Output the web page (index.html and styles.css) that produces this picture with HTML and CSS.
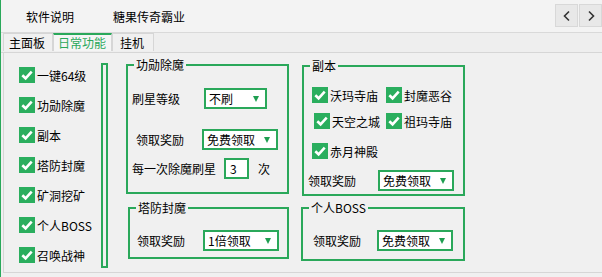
FILE: index.html
```html
<!DOCTYPE html>
<html lang="zh-CN">
<head>
  <meta charset="UTF-8">
  <title>糖果传奇霸业</title>
  <link rel="stylesheet" href="styles.css">
</head>
<body>
  <div class="window">
    <header class="topbar">
      <nav class="menu">
        <span class="menu-item">软件说明</span>
        <span class="menu-item">糖果传奇霸业</span>
      </nav>
      <div class="pager">
        <button class="pager-btn"><svg width="10" height="12" viewBox="0 0 10 12"><polyline points="7,1.5 2.5,6 7,10.5" fill="none" stroke="#333" stroke-width="1.6"/></svg></button>
        <button class="pager-btn"><svg width="10" height="12" viewBox="0 0 10 12"><polyline points="3,1.5 7.5,6 3,10.5" fill="none" stroke="#333" stroke-width="1.6"/></svg></button>
      </div>
    </header>

    <div class="tabs">
      <span class="tab">主面板</span>
      <span class="tab active">日常功能</span>
      <span class="tab">挂机</span>
    </div>

    <main class="panel">
      <ul class="checklist">
        <li class="check"><span class="box"></span>一键64级</li>
        <li class="check"><span class="box"></span>功勋除魔</li>
        <li class="check"><span class="box"></span>副本</li>
        <li class="check"><span class="box"></span>塔防封魔</li>
        <li class="check"><span class="box"></span>矿洞挖矿</li>
        <li class="check"><span class="box"></span>个人BOSS</li>
        <li class="check"><span class="box"></span>召唤战神</li>
      </ul>
      <div class="divider"></div>

      <div class="groups">
        <fieldset class="group group-xunmo">
          <legend>功勋除魔</legend>
          <div class="field first">
            <span class="label lbl-star">刷星等级</span>
            <div class="combo combo-short">不刷<span class="arrow"></span></div>
          </div>
          <div class="field second">
            <span class="label lbl-reward">领取奖励</span>
            <div class="combo">免费领取<span class="arrow"></span></div>
          </div>
          <div class="field third">
            <span class="label lbl-times">每一次除魔刷星</span>
            <div class="num">3</div>
            <span class="unit">次</span>
          </div>
        </fieldset>

        <fieldset class="group group-fuben">
          <legend>副本</legend>
          <div class="cb-row">
            <span class="check small"><span class="box"></span>沃玛寺庙</span>
            <span class="check small"><span class="box"></span>封魔恶谷</span>
          </div>
          <div class="cb-row mid">
            <span class="check small shift"><span class="box"></span>天空之城</span>
            <span class="check small"><span class="box"></span>祖玛寺庙</span>
          </div>
          <div class="cb-row last">
            <span class="check small"><span class="box"></span>赤月神殿</span>
          </div>
          <div class="field reward">
            <span class="label lbl-fuben">领取奖励</span>
            <div class="combo">免费领取<span class="arrow"></span></div>
          </div>
        </fieldset>

        <fieldset class="group group-tafang">
          <legend>塔防封魔</legend>
          <div class="field single">
            <span class="label lbl-tafang">领取奖励</span>
            <div class="combo tall">1倍领取<span class="arrow"></span></div>
          </div>
        </fieldset>

        <fieldset class="group group-boss">
          <legend>个人BOSS</legend>
          <div class="field single">
            <span class="label lbl-boss">领取奖励</span>
            <div class="combo">免费领取<span class="arrow"></span></div>
          </div>
        </fieldset>
      </div>
    </main>
  </div>
</body>
</html>
```

FILE: styles.css
```css
body {
  margin: 0;
  background-color: #f0f0f0;
  font-family: "Noto Sans CJK SC", "Noto Sans", sans-serif;
  font-size: 12px;
  color: #000;
}
.window {
  width: 602px;
  height: 277px;
  border-left: 1px solid #2aa85a;
  box-sizing: border-box;
  overflow: hidden;
}
.topbar {
  height: 33px;
  display: flex;
  justify-content: space-between;
  background-color: #f3f3f3;
  border-bottom: 1px solid #d9d9d9;
  box-sizing: border-box;
}
.menu {
  display: flex;
  align-items: center;
  height: 33px;
}
.menu-item {
  padding-left: 25px;
  padding-right: 14px;
}
.pager {
  display: flex;
  padding-top: 4px;
  gap: 1px;
}
.pager-btn {
  width: 23px;
  height: 23px;
  padding: 0;
  border: 1px solid #d8d8d8;
  background-color: #e8e8e8;
  display: flex;
  align-items: center;
  justify-content: center;
}
.tabs {
  height: 19px;
  display: flex;
  padding-left: 2px;
  background-color: #eeeeee;
  border-bottom: 1px solid #d6d6d6;
}
.tab {
  height: 18px;
  line-height: 18px;
  padding: 0 5px;
  border: 1px solid #d6d6d6;
  border-bottom: none;
  background-color: #f0f0f0;
  box-sizing: border-box;
}
.tab:first-child {
  width: 50px;
}
.tab.active {
  width: 59px;
  padding-left: 4px;
  color: #2aa85a;
  border-top: 2px solid #2aa85a;
  line-height: 16px;
  background-color: #f5f5f5;
}
.tab:last-child {
  width: 42px;
  padding-left: 7px;
}
.panel {
  display: flex;
  height: 219px;
  margin-left: 2px;
  border-left: 1px solid #d6d6d6;
  border-bottom: 1px solid #d6d6d6;
}
.checklist {
  list-style: none;
  margin: 0;
  padding: 14px 0 0 15px;
  width: 82px;
  display: flex;
  flex-direction: column;
  gap: 14px;
}
.check {
  display: flex;
  align-items: center;
  gap: 2px;
  height: 16px;
  white-space: nowrap;
}
.box {
  width: 16px;
  height: 16px;
  flex: none;
  background-color: #2aae5e;
  background-image: url("data:image/svg+xml,%3Csvg xmlns='http://www.w3.org/2000/svg' width='16' height='16'%3E%3Cpath d='M3.3 8.2 L6.6 11.3 L12.7 4.6' fill='none' stroke='white' stroke-width='2.6'/%3E%3C/svg%3E");
}
.divider {
  width: 7px;
  height: 205px;
  margin-top: 10px;
  border: 2px solid #2aa85a;
  box-sizing: border-box;
}
.groups {
  display: grid;
  grid-template-columns: 163px 163px;
  grid-template-rows: 136px 58px;
  column-gap: 13px;
  row-gap: 7px;
  margin-left: 18px;
  margin-top: 5px;
}
.group {
  margin: 0;
  padding: 0;
  min-width: 0;
  border: 2px solid #2aa85a;
}
.group legend {
  margin-left: 6px;
  padding: 0 2px;
  line-height: 14px;
  font-size: 12px;
}
.group-fuben {
  margin-top: 1px;
  height: 133px;
}
.group-tafang {
  margin-left: 2px;
}
.group-boss {
  margin-left: -1px;
  height: 56px;
}
.field {
  display: flex;
  align-items: center;
  height: 20px;
}
.label {
  padding-left: 4px;
  box-sizing: border-box;
  flex: none;
}
.combo {
  position: relative;
  width: 76px;
  height: 21px;
  box-sizing: border-box;
  border: 2px solid #2aa85a;
  background-color: #fff;
  line-height: 17px;
  padding-left: 3px;
}
.combo-short {
  width: 63px;
}
.arrow {
  position: absolute;
  right: 6px;
  top: 6px;
  border-left: 3.5px solid transparent;
  border-right: 3.5px solid transparent;
  border-top: 6px solid #1e9e50;
}
.num {
  width: 25px;
  height: 21px;
  box-sizing: border-box;
  border: 2px solid #2aa85a;
  background-color: #fff;
  line-height: 17px;
  padding-left: 4px;
  margin-left: 8px;
}
.unit {
  margin-left: 9px;
}
.group-xunmo .first {
  margin-top: 16px;
}
.group-xunmo .second {
  margin-top: 21px;
}
.group-xunmo .third {
  margin-top: 9px;
}
.lbl-star {
  width: 76px;
}
.lbl-reward {
  width: 74px;
  padding-left: 8px;
}
.cb-row {
  display: flex;
  padding-left: 8px;
  margin-top: 14px;
}
.cb-row.mid {
  margin-top: 10px;
}
.cb-row.last {
  margin-top: 14px;
}
.check.small {
  width: 74px;
}
.check.small.shift {
  width: 72px;
  padding-left: 2px;
}
.group-fuben .reward {
  margin-top: 11px;
}
.lbl-fuben {
  width: 74px;
}
.single {
  margin-top: 15px;
}
.lbl-tafang {
  width: 73px;
  padding-left: 7px;
}
.lbl-boss {
  width: 74px;
  padding-left: 10px;
}
```
